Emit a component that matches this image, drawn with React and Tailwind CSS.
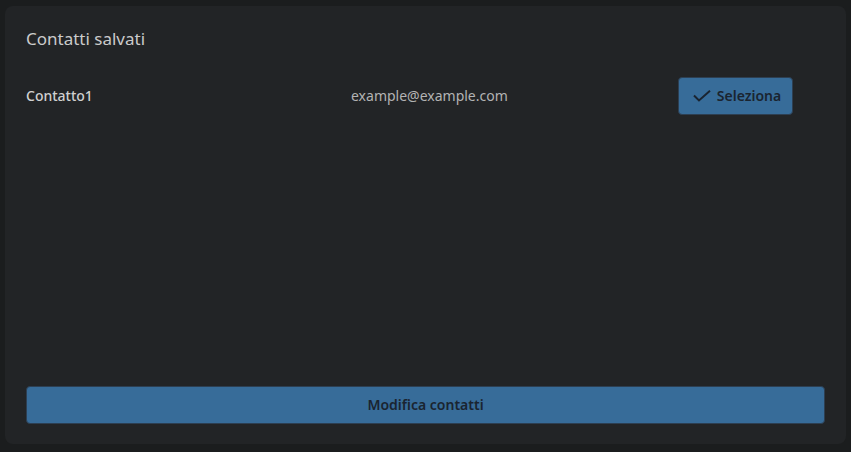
export default function App() {
  const contacts = [{ name: 'Contatto1', email: 'example@example.com' }]

  return (
    <div className="w-[851px] h-[452px] bg-[#1b1d1e] pt-[6px] px-[5px] font-['Noto_Sans',sans-serif]">
      <div className="h-[438px] rounded-lg bg-[#222426] px-[21px] pt-[21px] pb-[20px] flex flex-col">
        <h2 className="text-[17px] leading-6 text-[#cbcbcb] mb-[26px]">
          Contatti salvati
        </h2>

        {contacts.map(c => (
          <div key={c.name} className="flex items-center">
            <span className="w-[325px] text-sm font-medium text-[#d0d0d0]">
              {c.name}
            </span>
            <span className="text-sm text-[#b3b3b3]">{c.email}</span>
            <button className="ml-[170px] flex items-center gap-[6px] h-[38px] pl-[14px] pr-[11px] rounded border border-[#2d3f52] bg-[#376c99] text-sm font-semibold text-[#1a2430]">
              <svg width="18" height="12" viewBox="0 0 18 12" fill="none">
                <polyline
                  points="1,5.5 6,10.5 17,0.8"
                  stroke="#1a2430"
                  strokeWidth="2"
                />
              </svg>
              Seleziona
            </button>
          </div>
        ))}

        <button className="mt-auto h-[38px] w-full rounded border border-[#2d3f52] bg-[#376c99] text-sm font-semibold text-[#1a2430]">
          Modifica contatti
        </button>
      </div>
    </div>
  )
}
